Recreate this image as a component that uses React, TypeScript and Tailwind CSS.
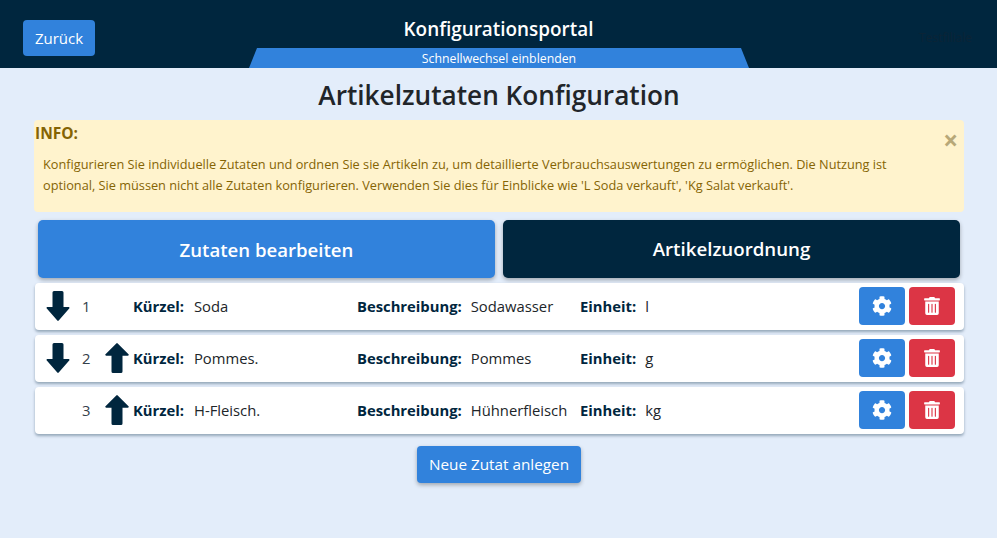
import React from "react";
import { FaCog, FaTrashAlt } from "react-icons/fa";

const Down = () => (
  <svg width="24" height="30" viewBox="0 0 24 30" className="block text-[#00263e]">
    <path d="M8 0h8a1.500 1.500 0 0 1 1.500 1.500V16h5c.9 0 1.300 1 .7 1.600L12.700 29.600a1 1 0 0 1-1.400 0L.8 17.600C.2 17 .6 16 1.500 16h5V1.500A1.500 1.500 0 0 1 8 0z" fill="currentColor" />
  </svg>
);
const Up = () => (
  <svg width="24" height="30" viewBox="0 0 24 30" className="block text-[#00263e]">
    <path d="M11.300.4a1 1 0 0 1 1.400 0l10.800 10.800c.6.6.2 1.600-.7 1.600H17.500v15.700a1.500 1.500 0 0 1-1.500 1.500H8a1.500 1.500 0 0 1-1.500-1.500V12.800H1.200c-.9 0-1.300-1-.7-1.600z" fill="currentColor" />
  </svg>
);

const rows = [
  { n: 1, k: "Soda", b: "Sodawasser", e: "l", down: true, up: false },
  { n: 2, k: "Pommes.", b: "Pommes", e: "g", down: true, up: true },
  { n: 3, k: "H-Fleisch.", b: "Hühnerfleisch", e: "kg", down: false, up: true },
];

export default function App() {
  return (
    <div className="min-h-[538px] bg-[#e3edfa] text-[#212529] font-['Open_Sans','Noto_Sans',sans-serif]">
      <header className="relative h-[68px] bg-[#00263e] flex items-center px-[23px]">
        <button className="mt-[8px] h-[36px] w-[72px] rounded-[4px] bg-[#3182dc] text-white text-[15px]">Zurück</button>
        <div className="flex-1" />
        <span className="mt-[7px] mr-[2px] text-[12px] text-[#0b2436]">Testfiliale</span>
        <div className="absolute left-0 right-0 top-[17px] text-center text-white text-[18.900px] font-semibold leading-[24px]">Konfigurationsportal</div>
        <div className="absolute left-[249px] top-[48px] h-[20px] w-[500px] bg-[#3182dc] text-white text-[12.300px] leading-[21px] text-center [clip-path:polygon(8px_0,492px_0,100%_100%,0_100%)]">Schnellwechsel einblenden</div>
      </header>

      <main className="pl-[34px] pr-[33px]">
        <h1 className="h-[52px] text-center text-[26.200px] font-semibold leading-[55px]">Artikelzutaten Konfiguration</h1>

        <div className="relative h-[92px] rounded-[4px] bg-[#fff3cd] text-[#856404]">
          <div className="pl-px pt-[3px] text-[15.500px] font-bold leading-[20px]">INFO:</div>
          <p className="pl-[9px] pt-[11px] text-[12.740px] leading-[21px]">
            Konfigurieren Sie individuelle Zutaten und ordnen Sie sie Artikeln zu, um detaillierte Verbrauchsauswertungen zu ermöglichen. Die Nutzung ist
            <br />
            optional, Sie müssen nicht alle Zutaten konfigurieren. Verwenden Sie dies für Einblicke wie 'L Soda verkauft', 'Kg Salat verkauft'.
          </p>
          <span className="absolute right-[6px] top-[7px] text-[26px] font-bold leading-[26px] text-[#b8a878]">×</span>
        </div>

        <div className="mt-[8px] flex gap-[8px] px-[4px]">
          <button className="h-[58px] flex-1 rounded-[5px] bg-[#3182dc] pt-px text-white text-[18.600px] font-semibold shadow-[0_2px_4px_rgba(0,0,0,0.3)]">Zutaten bearbeiten</button>
          <button className="h-[58px] flex-1 rounded-[5px] bg-[#00263e] pt-px text-white text-[18.700px] font-semibold shadow-[0_2px_4px_rgba(0,0,0,0.3)]">Artikelzuordnung</button>
        </div>

        <div className="mt-[5px] ml-px flex flex-col gap-[5px]">
          {rows.map((r) => (
            <div key={r.n} className="flex h-[47px] items-center rounded-[4px] bg-white text-[14.800px] shadow-[0_2px_3px_rgba(0,38,62,0.35)]">
              <div className="mb-px ml-[11px] w-[24px]">{r.down && <Down />}</div>
              <div className="ml-[12px] w-[22px] text-[#33404a]">{r.n}</div>
              <div className="mb-px ml-[1px] mr-px w-[24px]">{r.up && <Up />}</div>
              <div className="flex w-[227px] gap-[10px] pl-[3px]"><b className="font-bold text-[#00263e]">Kürzel:</b><span>{r.k}</span></div>
              <div className="flex w-[223px] gap-[9px]"><b className="font-bold text-[#00263e]">Beschreibung:</b><span>{r.b}</span></div>
              <div className="flex gap-[9px]"><b className="font-bold text-[#00263e]">Einheit:</b><span>{r.e}</span></div>
              <div className="mb-px ml-auto mr-[9px] flex gap-[4px]">
                <button className="flex h-[38px] w-[46px] items-center justify-center rounded-[4px] bg-[#3182dc] text-white"><FaCog size={20} /></button>
                <button className="flex h-[38px] w-[46px] items-center justify-center rounded-[4px] bg-[#dc3545] text-white"><FaTrashAlt size={18} /></button>
              </div>
            </div>
          ))}
        </div>

        <div className="mt-[12px] flex justify-center">
          <button className="h-[37px] w-[164px] rounded-[4px] bg-[#3182dc] text-white text-[15.300px] shadow-[0_2px_4px_rgba(0,0,0,0.3)]">Neue Zutat anlegen</button>
        </div>
      </main>
    </div>
  );
}
